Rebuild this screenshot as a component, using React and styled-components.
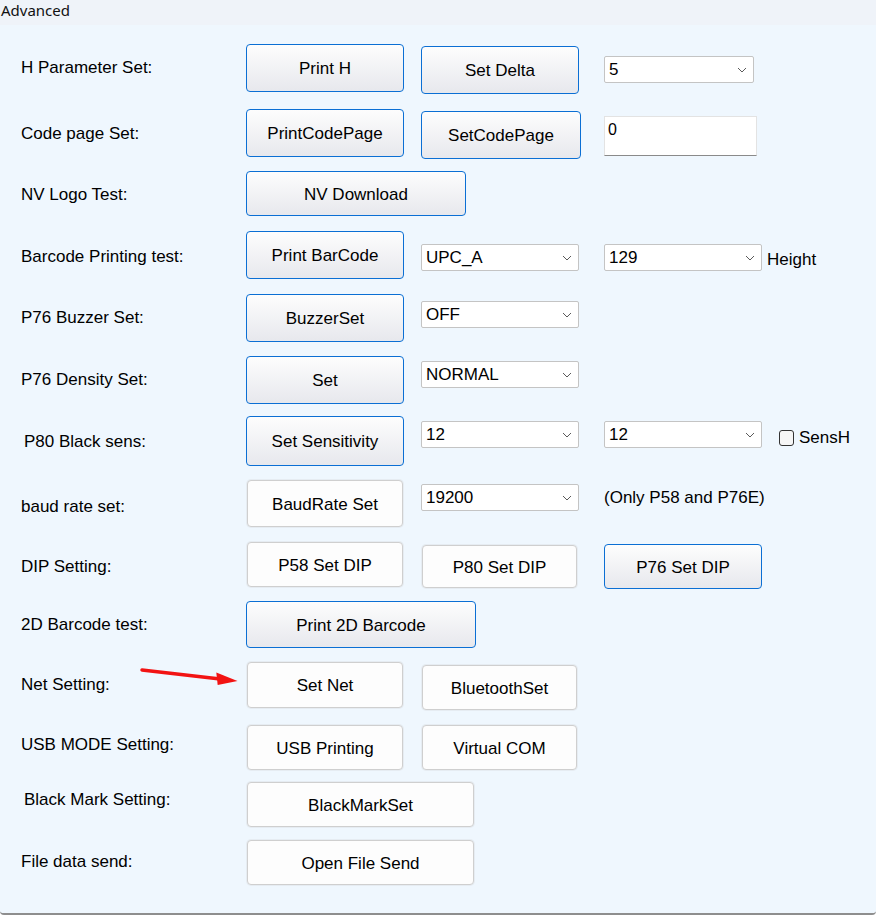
import React from 'react';
import styled, { createGlobalStyle, css } from 'styled-components';

const GlobalStyle = createGlobalStyle`
    html, body {
        margin: 0;
        padding: 0;
        background: #ffffff;
    }
    * {
        box-sizing: border-box;
    }
`;

const FONT = `"Liberation Sans", Arial, sans-serif`;

const Styled = {
    Window: styled.div`
        position: relative;
        width: 876px;
        height: 915px;
        overflow: hidden;
        font-family: ${FONT};
        color: #000;
    `,

    TabHeader: styled.div`
        height: 25px;
        padding-left: 1px;
        background-color: #eff3f9;
        font-family: "Noto Sans", "Liberation Sans", sans-serif;
        font-size: 15px;
        line-height: 20px;
        color: #111;
    `,

    Panel: styled.div`
        position: relative;
        height: 890px;
        padding: 19px 0 0 21px;
        background-color: #eff7fe;
        border-bottom: 2px solid #8e8e8e;
        border-radius: 0 0 4px 4px;
    `,

    Row: styled.div`
        display: grid;
        grid-template-columns: 225px 175px 183px 163px 1fr;
        align-items: start;
        height: ${({ $h }) => $h}px;
    `,

    Label: styled.div`
        margin-top: ${({ $y }) => $y + 1}px;
        padding-left: ${({ $indent }) => $indent || 0}px;
        font-size: 17px;
        line-height: 20px;
        white-space: nowrap;
    `,

    Button: styled.button`
        grid-column: ${({ $span }) => ($span ? `span ${$span}` : 'auto')};
        width: ${({ $w }) => $w}px;
        height: ${({ $h }) => $h}px;
        margin-top: ${({ $y }) => $y || 0}px;
        padding: 2px 0 0;
        border-radius: 4px;
        font-family: ${FONT};
        font-size: 17px;
        color: #000;
        cursor: default;
        ${({ $focus }) =>
            $focus
                ? css`
                      border: 1px solid #0b6fd4;
                      background: linear-gradient(#fdfdfd, #e7e8ed);
                  `
                : css`
                      margin-left: 1px;
                      border: 1px solid #cfcfcf;
                      background: #fdfdfd;
                      box-shadow: 0 0 0 1px #e6ecf2;
                  `}
    `,

    Select: styled.div`
        display: flex;
        align-items: center;
        justify-content: space-between;
        width: ${({ $w }) => $w}px;
        height: 27px;
        margin-top: ${({ $y }) => $y || 0}px;
        padding: 1px 6px 0 4px;
        background: #ffffff;
        border: 1px solid #c4c4c4;
        border-radius: 2px;
        font-size: 17px;
        line-height: 20px;
    `,

    TextBox: styled.div`
        width: ${({ $w }) => $w}px;
        height: 40px;
        margin-top: ${({ $y }) => $y || 0}px;
        padding: 3px 3px;
        background: #ffffff;
        border: 1px solid #e3e3e3;
        border-bottom-color: #8a8a8a;
        font-size: 16px;
        line-height: 19px;
    `,

    Note: styled.div`
        grid-column: ${({ $span }) => ($span ? `span ${$span}` : 'auto')};
        margin-top: ${({ $y }) => ($y || 0) + 1}px;
        font-size: 17px;
        line-height: 20px;
        white-space: nowrap;
    `,

    CheckGroup: styled.label`
        display: flex;
        align-items: center;
        gap: 5px;
        height: 20px;
        margin-top: ${({ $y }) => $y || 0}px;
        margin-left: 12px;
        font-size: 17px;
        line-height: 20px;
        white-space: nowrap;
    `,

    CheckBox: styled.span`
        display: inline-block;
        width: 15px;
        height: 16px;
        border: 1px solid #333333;
        border-radius: 3px;
        background: #f6f6f6;
    `,

    Arrow: styled.svg`
        position: absolute;
        left: 138px;
        top: 639px;
        pointer-events: none;
    `,
};

const Chevron = () => (
    <svg width="10" height="6" viewBox="0 0 10 6">
        <path d="M1 1 L5 5 L9 1" fill="none" stroke="#5a5a5a" strokeWidth="1" />
    </svg>
);

const rows = [
    { label: 'H Parameter Set:', ly: 13, h: 65, items: [
        { kind: 'btn', text: 'Print H', w: 158, h: 48, focus: true },
        { kind: 'btn', text: 'Set Delta', w: 158, h: 48, y: 2, focus: true },
        { kind: 'select', text: '5', w: 150, y: 12 },
    ] },
    { label: 'Code page Set:', ly: 14, h: 62, items: [
        { kind: 'btn', text: 'PrintCodePage', w: 158, h: 48, focus: true },
        { kind: 'btn', text: 'SetCodePage', w: 160, h: 48, y: 2, focus: true },
        { kind: 'text', text: '0', w: 153, y: 7 },
    ] },
    { label: 'NV Logo Test:', ly: 13, h: 60, items: [
        { kind: 'btn', text: 'NV Download', w: 220, h: 45, span: 2, focus: true },
    ] },
    { label: 'Barcode Printing test:', ly: 15, h: 63, items: [
        { kind: 'btn', text: 'Print BarCode', w: 158, h: 48, focus: true },
        { kind: 'select', text: 'UPC_A', w: 158, y: 13 },
        { kind: 'select', text: '129', w: 158, y: 13 },
        { kind: 'note', text: 'Height', y: 18 },
    ] },
    { label: 'P76 Buzzer Set:', ly: 13, h: 62, items: [
        { kind: 'btn', text: 'BuzzerSet', w: 158, h: 48, focus: true },
        { kind: 'select', text: 'OFF', w: 158, y: 7 },
    ] },
    { label: 'P76 Density Set:', ly: 13, h: 60, items: [
        { kind: 'btn', text: 'Set', w: 158, h: 48, focus: true },
        { kind: 'select', text: 'NORMAL', w: 158, y: 5 },
    ] },
    { label: 'P80 Black sens:', ly: 15, indent: 3, h: 64, items: [
        { kind: 'btn', text: 'Set Sensitivity', w: 158, h: 50, focus: true },
        { kind: 'select', text: '12', w: 158, y: 5 },
        { kind: 'select', text: '12', w: 158, y: 5 },
        { kind: 'check', text: 'SensH', y: 12 },
    ] },
    { label: 'baud rate set:', ly: 16, h: 62, items: [
        { kind: 'btn', text: 'BaudRate Set', w: 156, h: 47 },
        { kind: 'select', text: '19200', w: 158, y: 4 },
        { kind: 'note', text: '(Only P58 and P76E)', y: 7, span: 2 },
    ] },
    { label: 'DIP Setting:', ly: 14, h: 59, items: [
        { kind: 'btn', text: 'P58 Set DIP', w: 156, h: 45 },
        { kind: 'btn', text: 'P80 Set DIP', w: 155, h: 43, y: 3 },
        { kind: 'btn', text: 'P76 Set DIP', w: 158, h: 45, y: 2, focus: true },
    ] },
    { label: '2D Barcode test:', ly: 13, h: 61, items: [
        { kind: 'btn', text: 'Print 2D Barcode', w: 230, h: 47, span: 2, focus: true },
    ] },
    { label: 'Net Setting:', ly: 12, h: 63, items: [
        { kind: 'btn', text: 'Set Net', w: 156, h: 46 },
        { kind: 'btn', text: 'BluetoothSet', w: 155, h: 45, y: 3 },
    ] },
    { label: 'USB MODE Setting:', ly: 9, h: 57, items: [
        { kind: 'btn', text: 'USB Printing', w: 156, h: 45 },
        { kind: 'btn', text: 'Virtual COM', w: 155, h: 45 },
    ] },
    { label: 'Black Mark Setting:', ly: 7, indent: 3, h: 58, items: [
        { kind: 'btn', text: 'BlackMarkSet', w: 227, h: 45, span: 2 },
    ] },
    { label: 'File data send:', ly: 11, h: 48, items: [
        { kind: 'btn', text: 'Open File Send', w: 227, h: 45, span: 2 },
    ] },
];

function Control({ item }) {
    switch (item.kind) {
        case 'btn':
            return (
                <Styled.Button $w={item.w} $h={item.h} $y={item.y} $span={item.span} $focus={item.focus}>
                    {item.text}
                </Styled.Button>
            );
        case 'select':
            return (
                <Styled.Select $w={item.w} $y={item.y}>
                    <span>{item.text}</span>
                    <Chevron />
                </Styled.Select>
            );
        case 'text':
            return <Styled.TextBox $w={item.w} $y={item.y}>{item.text}</Styled.TextBox>;
        case 'check':
            return (
                <Styled.CheckGroup $y={item.y}>
                    <Styled.CheckBox />
                    {item.text}
                </Styled.CheckGroup>
            );
        default:
            return <Styled.Note $y={item.y} $span={item.span}>{item.text}</Styled.Note>;
    }
}

export default function App() {
    return (
        <>
            <GlobalStyle />
            <Styled.Window>
                <Styled.TabHeader>Advanced</Styled.TabHeader>
                <Styled.Panel>
                    {rows.map((row) => (
                        <Styled.Row key={row.label} $h={row.h}>
                            <Styled.Label $y={row.ly} $indent={row.indent}>{row.label}</Styled.Label>
                            {row.items.map((item, idx) => (
                                <Control key={idx} item={item} />
                            ))}
                        </Styled.Row>
                    ))}
                    <Styled.Arrow width="104" height="26" viewBox="0 0 104 26">
                        <line x1="4" y1="6" x2="80" y2="14.8" stroke="#f21313" strokeWidth="3.5" strokeLinecap="round" />
                        <polygon points="78.3,8.5 99.5,17 79.7,21" fill="#f21313" />
                    </Styled.Arrow>
                </Styled.Panel>
            </Styled.Window>
        </>
    );
}
